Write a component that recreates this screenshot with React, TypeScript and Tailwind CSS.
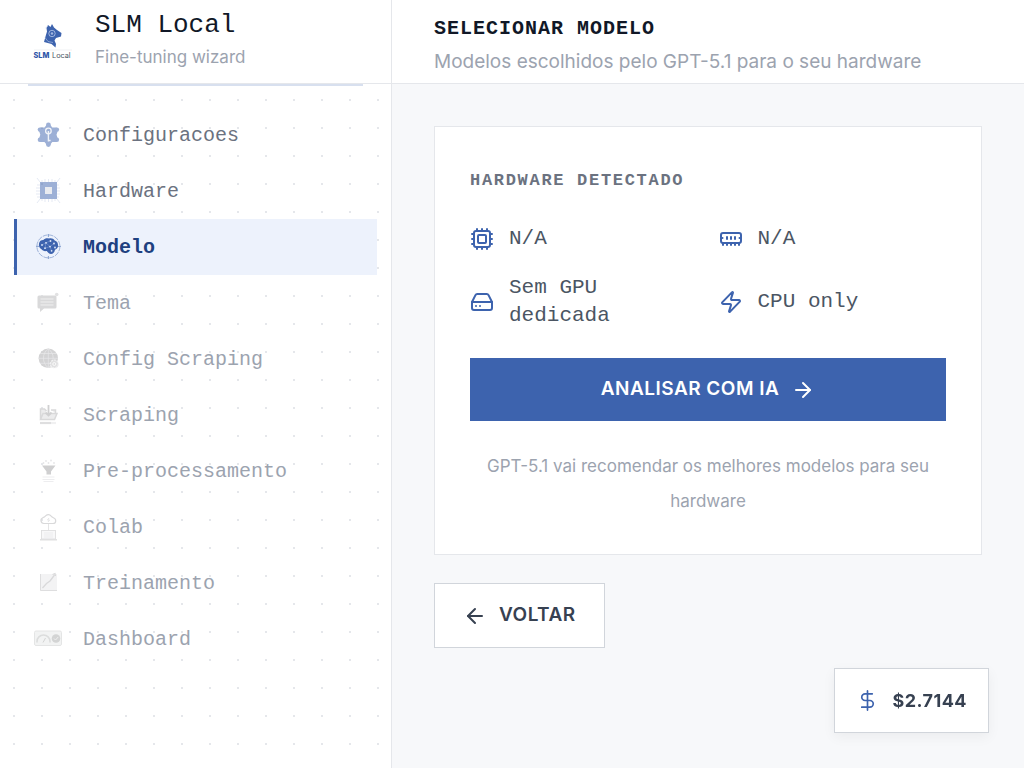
import type { ReactNode } from 'react';
import { ArrowLeft, ArrowRight, Cpu, DollarSign, HardDrive, MemoryStick, Zap } from 'lucide-react';

type StepStatus = 'done' | 'active' | 'pending';

interface Step {
  label: string;
  status: StepStatus;
  icon: ReactNode;
}

const stepStyles: Record<StepStatus, { row: string; icon: string }> = {
  done: { row: 'border-transparent text-[#6b7280]', icon: 'opacity-50 text-[#3d63ae]' },
  active: { row: 'border-[#3d63ae] bg-[#edf2fc] font-bold text-[#1e4080]', icon: 'text-[#3d63ae]' },
  pending: { row: 'border-transparent text-[#9ca3af]', icon: 'text-[#d9d9da]' },
};

const steps: Step[] = [
  {
    label: 'Configuracoes',
    status: 'done',
    icon: (
      <>
        <path d="M12.500 4h3.800l2 2.500h4.200l1.500 2.500-1.500 4.700 1.500 4.700-1.500 2.500h-4.200l-2 2.500h-3.800l-2-2.500H6.300l-1.500-2.500 1.500-4.700L4.800 9l1.500-2.500h4.200z" fill="currentColor" />
        <g fill="currentColor">
          <circle cx="14.4" cy="4" r="2.4" />
          <circle cx="14.4" cy="23.5" r="2.4" />
          <circle cx="5.9" cy="8.6" r="2.2" />
          <circle cx="22.9" cy="8.6" r="2.2" />
          <circle cx="5.9" cy="18.8" r="2.2" />
          <circle cx="22.9" cy="18.8" r="2.2" />
        </g>
        <circle cx="14.4" cy="10" r="2.8" fill="none" stroke="#e3e8f3" strokeWidth="1.3" />
        <path d="M14.4 10v10.500M14.4 19.5h2.2" fill="none" stroke="#e3e8f3" strokeWidth="1.4" />
      </>
    ),
  },
  {
    label: 'Hardware',
    status: 'done',
    icon: (
      <>
        <path
          d="M8 5V3M11 5V2M14.500 5V2M18 5V2M21 5V3M8 22v2M11 22v3M14.500 22v3M18 22v3M21 22v2M6 8H3M6 11H2M6 14H2M6 17H2M6 20H3M23 8h2M23 11h3M23 14h3M23 17h3M23 20h2M6 5 3 1M23 5l3-4M6 22l-3 4M23 22l3 4"
          stroke="currentColor"
          strokeWidth="1"
          opacity="0.25"
        />
        <rect x="6" y="5" width="17" height="17" fill="currentColor" />
        <rect x="11" y="10" width="7" height="7" fill="#d5d9e2" />
      </>
    ),
  },
  {
    label: 'Modelo',
    status: 'active',
    icon: (
      <>
        <circle cx="14.4" cy="13.4" r="11.500" fill="none" stroke="#8aa3d0" strokeWidth="0.8" strokeDasharray="5 1" />
        <path d="M14.4 1v3M14.4 23v3M2 13.4h3M24 13.4h3" stroke="#7f9acb" strokeWidth="0.9" />
        <path
          d="M5 10.500c.4-2.300 2.300-3.500 4.300-3.400 1.500-2 4-2.400 5.700-1.500 2-.9 4.600-.1 5.700 1.800 2.300.5 3.500 2.600 3.300 4.700.4 2.300-1 4.300-3 4.600-.4 2.400-2 4.300-4 4.300-1.800 0-3.200-1.500-4.300-3-2.200.5-4.200-.2-5.200-1.700-2-1-3-3.500-2.500-5.800z"
          fill="currentColor"
        />
        <path d="m8 12 4-2.200 4 3.800 4-3.100M12 9.800l-1 5.400 5-1.600 1.600 4.200M16 8l-4 1.800" fill="none" stroke="#8ba5d6" strokeWidth="0.5" />
        <g fill="#dce6f8">
          <circle cx="8" cy="12" r="0.9" />
          <circle cx="12" cy="9.800" r="0.9" />
          <circle cx="16.500" cy="8" r="0.9" />
          <circle cx="16" cy="13.600" r="0.9" />
          <circle cx="20" cy="10.500" r="0.9" />
          <circle cx="11" cy="15.200" r="0.9" />
          <circle cx="17.600" cy="17.800" r="0.9" />
          <circle cx="21" cy="14.500" r="0.9" />
        </g>
      </>
    ),
  },
  {
    label: 'Tema',
    status: 'pending',
    icon: (
      <>
        <path d="M5 6.500h16a1.500 1.500 0 0 1 1.500 1.500v10a1.500 1.500 0 0 1-1.500 1.500H10l-4 3.500v-3.500H5A1.500 1.500 0 0 1 3.500 18V8A1.500 1.500 0 0 1 5 6.500z" fill="currentColor" />
        <path d="M6.500 10h13M6.500 13h13M6.500 16h13" stroke="#f0f0f0" strokeWidth="1" />
        <circle cx="22.700" cy="5.500" r="1.800" fill="#e2e2e3" />
      </>
    ),
  },
  {
    label: 'Config Scraping',
    status: 'pending',
    icon: (
      <>
        <circle cx="14.300" cy="13.300" r="9.700" fill="#d3d3d4" />
        <path
          d="M4.600 13.300H24M6 8.500h17M6 18.300h14M14.300 3.600V23M14.300 3.600c-6.500 5-6.500 14 0 19.400M14.300 3.600c6.500 5 6.500 14 0 19.400"
          fill="none"
          stroke="#e8e8e9"
          strokeWidth="0.7"
        />
        <circle cx="20.300" cy="19" r="4" fill="#e0e0e1" stroke="#f3f3f4" strokeWidth="1.200" strokeDasharray="2 1" />
        <circle cx="20.300" cy="19" r="1.500" fill="none" stroke="#fafafa" />
      </>
    ),
  },
  {
    label: 'Scraping',
    status: 'pending',
    icon: (
      <>
        <path d="M6.500 18V8h4l2 2M17 9h4.500v3M6.500 18.500 9 12.500h14l-2.500 6z" fill="#ececed" stroke="currentColor" strokeWidth="1.500" />
        <path d="M14.500 4v10M11.500 11.500l3 3 3-3" fill="none" stroke="#d0d0d1" strokeWidth="1.800" />
        <path d="M6 22h11" stroke="#dededf" strokeWidth="2.200" />
        <path d="M17 22h5" stroke="#f0f0f1" strokeWidth="2.200" />
      </>
    ),
  },
  {
    label: 'Pre-processamento',
    status: 'pending',
    icon: (
      <>
        <g fill="#e6e6e8">
          <circle cx="9.500" cy="6" r="0.9" />
          <circle cx="12" cy="4" r="0.9" />
          <circle cx="14.500" cy="6" r="0.9" />
          <circle cx="17" cy="3.500" r="0.9" />
          <circle cx="20" cy="6" r="0.9" />
        </g>
        <path d="M8 8.500h13.500L17 14.500v3h-4.500v-3z" fill="#cfcfd0" />
        <path d="M8.500 20h12M8.500 22.500h12M9.500 24.500h10" stroke="#ededef" strokeWidth="1.200" />
      </>
    ),
  },
  {
    label: 'Colab',
    status: 'pending',
    icon: (
      <>
        <path
          d="M9.800 10.500a3 3 0 0 1-.9-5.800c1.400-.4 2-1 3-2 1.500-1.500 3.800-1.400 5 .2.800 1 1.400 1.500 2.500 1.900 3.300 1.200 3 5.700-.4 5.700z"
          fill="none"
          stroke="currentColor"
          strokeWidth="1.200"
        />
        <path d="m15 5-1.500 2h2L14 9M14.500 11v6.500" fill="none" stroke="#dededf" strokeWidth="0.8" />
        <rect x="7.500" y="17.500" width="14" height="8.500" fill="#f8f8f9" stroke="#dededf" strokeWidth="0.9" />
        <path d="M10 20h9M10 22h9M10 24h9" stroke="#e8e8ea" strokeWidth="0.7" />
        <path d="M6 26.800h17" stroke="#dededf" strokeWidth="1.400" />
      </>
    ),
  },
  {
    label: 'Treinamento',
    status: 'pending',
    icon: (
      <>
        <rect x="6" y="5" width="17" height="17" fill="#f3f3f4" />
        <path d="M6.500 5v16.500H23" fill="none" stroke="#dededf" strokeWidth="1" />
        <path d="m8.500 19 4-4.500 3.500-2.500 4.500-6" fill="none" stroke="currentColor" strokeWidth="1.300" />
        <path d="m18.500 5.500 2.500-1 .5 2.500" fill="none" stroke="currentColor" strokeWidth="1.200" />
      </>
    ),
  },
  {
    label: 'Dashboard',
    status: 'pending',
    icon: (
      <>
        <rect x="0.500" y="6" width="27" height="14.500" rx="1.500" fill="#f2f3f3" stroke="#e4e5e5" />
        <path d="M3 17.500v-1a6.500 6.500 0 0 1 13 0v1" fill="none" stroke="#dcdddd" strokeWidth="1.600" />
        <path d="m9 17.500 2.500-4.500" stroke="#d3d4d4" strokeWidth="1" />
        <circle cx="22" cy="13.500" r="4.300" fill="#d3d4d4" />
        <path d="m20 13.500 1.500 1.500 2.700-3" fill="none" stroke="#efefef" strokeWidth="1" />
      </>
    ),
  },
];

const hardware = [
  { icon: Cpu, text: 'N/A' },
  { icon: MemoryStick, text: 'N/A' },
  { icon: HardDrive, text: 'Sem GPU dedicada' },
  { icon: Zap, text: 'CPU only' },
];

const Logo = () => (
  <svg viewBox="0 0 50 50" className="size-[50px] shrink-0" role="img" aria-label="SLM Local">
    <path
      d="m18.500 14 1.500-3 2.500 2 1.500-3 2 3.500 3 2.500 4.500 3-.5 3.500-5 1.500-1.500 2.500 1.500 3.500-.5 3.500-4-3.500-7.500-2 1.500-5.500 1.500-5z"
      fill="#3d63ae"
    />
    <path d="m17 23.500 3 4 5 1M17.500 14l2.500-2" fill="none" stroke="#b8c8e8" strokeWidth="0.6" />
    <circle cx="24" cy="19.500" r="3.200" fill="#3d63ae" stroke="#b8c8e8" strokeWidth="0.8" />
    <circle cx="24" cy="19.500" r="1.200" fill="#a2b7df" />
    <path d="M6 36h38" stroke="#e5e7eb" strokeWidth="0.6" />
    <text x="5.500" y="44" fontSize="7.300" fontWeight="800" fill="#2f56a8">
      SLM
    </text>
    <text x="24" y="44" fontSize="7.300" fill="#4b5563">
      Local
    </text>
  </svg>
);

const Sidebar = () => (
  <aside className="flex w-[392px] shrink-0 flex-col border-r border-[#e5e7eb] bg-white">
    <div className="flex h-[84px] shrink-0 items-center gap-[17px] border-b border-[#e5e7eb] px-7 pb-1.5">
      <Logo />
      <div>
        <h1 className="font-['Liberation_Mono',monospace] text-[26px] leading-9 text-[#111827]">SLM Local</h1>
        <p className="text-[17px] leading-7 text-[#9ca3af]">Fine-tuning wizard</p>
      </div>
    </div>
    <div className="flex-1 bg-[radial-gradient(#e5e7eb_1px,transparent_1px)] bg-[length:28px_28px] bg-[position:0px_2px] px-3.5">
      <div className="mx-3.5 h-0.5 bg-[#d8e0ef]" />
      <nav className="pt-[21px]">
        {steps.map((step) => (
          <button
            key={step.label}
            type="button"
            disabled={step.status === 'pending'}
            className={`flex h-14 w-full items-center gap-[21px] border-l-[3px] pl-[17px] text-left font-['Liberation_Mono',monospace] text-[20px] ${stepStyles[step.status].row}`}
          >
            <svg viewBox="0 0 28 28" className={`size-7 shrink-0 ${stepStyles[step.status].icon}`} aria-hidden="true">
              {step.icon}
            </svg>
            <span className="pt-0.5">{step.label}</span>
          </button>
        ))}
      </nav>
    </div>
  </aside>
);

const HardwareCard = () => (
  <section className="border border-[#e5e7eb] bg-white p-[35px]">
    <h3 className="mb-[27px] pt-px font-['Liberation_Mono',monospace] text-[17px] leading-[35px] font-bold tracking-widest text-[#6b7280]">
      HARDWARE DETECTADO
    </h3>
    <ul className="grid grid-cols-2 gap-[21px]">
      {hardware.map(({ icon: Icon, text }, i) => (
        <li key={i} className="flex items-center gap-[15px]">
          <Icon className="size-6 shrink-0 text-[#3d63ae]" />
          <span className="font-['Liberation_Mono',monospace] text-[21px] leading-7 text-[#4b5563]">{text}</span>
        </li>
      ))}
    </ul>
    <button
      type="button"
      className="my-7 flex h-[63px] w-full items-center justify-center gap-3 bg-[#3d63ae] text-[19px] font-semibold tracking-wide text-white"
    >
      ANALISAR COM IA
      <ArrowRight className="size-6" />
    </button>
    <p className="text-center text-[17px] leading-[35px] text-[#9ca3af]">
      GPT-5.1 vai recomendar os melhores modelos para seu hardware
    </p>
  </section>
);

export default function App() {
  return (
    <div className="flex h-screen bg-[#f7f8fa] font-['Inter',sans-serif]">
      <Sidebar />
      <div className="flex min-w-0 flex-1 flex-col">
        <header className="flex h-[84px] shrink-0 flex-col justify-center gap-[5px] border-b border-[#e5e7eb] bg-white px-[42px] pt-2">
          <h2 className="font-['Liberation_Mono',monospace] text-[20px] leading-7 font-bold tracking-wider text-[#111827]">
            SELECIONAR MODELO
          </h2>
          <p className="text-[19px] leading-7 text-[#9ca3af]">Modelos escolhidos pelo GPT-5.1 para o seu hardware</p>
        </header>
        <main className="flex-1 overflow-hidden p-[42px]">
          <HardwareCard />
          <button
            type="button"
            className="mt-7 flex h-[65px] items-center gap-3 border border-[#d1d5db] bg-white px-7 text-[19px] font-semibold tracking-wide text-[#374151]"
          >
            <ArrowLeft className="size-6" />
            VOLTAR
          </button>
        </main>
      </div>
      <button
        type="button"
        className="fixed right-[35px] bottom-[35px] flex h-[65px] items-center gap-3.5 border border-[#d1d5db] bg-white px-[21px] text-[18px] font-bold tracking-wide text-[#374151] shadow-[0_4px_12px_rgba(0,0,0,0.05)]"
      >
        <DollarSign className="size-[23px] text-[#3d63ae]" strokeWidth={1.75} />
        $2.7144
      </button>
    </div>
  );
}
